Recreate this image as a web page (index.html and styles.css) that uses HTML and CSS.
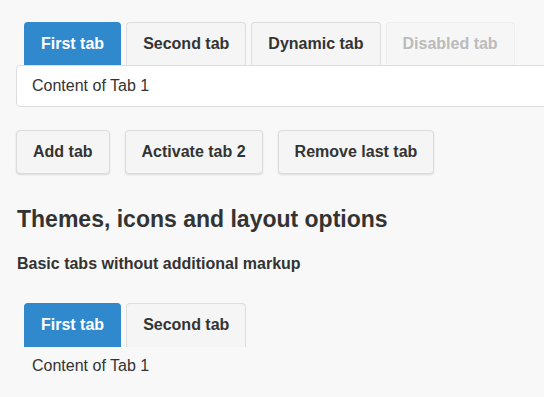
FILE: index.html
```html
<!DOCTYPE html>
<html lang="en">

<head>
    <meta charset="UTF-8">
    <meta name="viewport" content="width=device-width, initial-scale=1.0">
    <title>Tabs</title>
    <link rel="stylesheet" href="styles.css">
</head>

<body>
    <div class="tabs">
        <ul class="tab-list">
            <li class="tab active">First tab</li>
            <li class="tab">Second tab</li>
            <li class="tab">Dynamic tab</li>
            <li class="tab disabled">Disabled tab</li>
        </ul>
        <div class="tab-panel">Content of Tab 1</div>
    </div>

    <div class="actions">
        <button type="button">Add tab</button>
        <button type="button">Activate tab 2</button>
        <button type="button">Remove last tab</button>
    </div>

    <h2>Themes, icons and layout options</h2>
    <h4>Basic tabs without additional markup</h4>

    <div class="tabs plain">
        <ul class="tab-list">
            <li class="tab active">First tab</li>
            <li class="tab">Second tab</li>
        </ul>
        <div class="tab-panel">Content of Tab 1</div>
    </div>
</body>

</html>
```

FILE: styles.css
```css
html,
body {
    overflow-x: hidden;
}

body {
    font-family: "Liberation Sans", Arial, sans-serif;
    font-size: 16px;
    color: #333;
    background-color: #f8f8f8;
    margin: 0;
    padding: 22px 0 0 16px;
}

.tabs {
    margin-right: -6px;
}

.tab-list {
    display: flex;
    gap: 5px;
    list-style: none;
    margin: 0;
    padding: 0 0 0 8px;
}

.tab {
    padding: 12px 16px;
    line-height: 18px;
    font-weight: bold;
    background-color: #f5f5f5;
    border: 1px solid #ddd;
    border-bottom: none;
    border-radius: 4px 4px 0 0;
    cursor: pointer;
}

.tab.active {
    background-color: #3088cd;
    border-color: #3088cd;
    color: #fff;
}

.tab.disabled {
    color: #bbb;
    background-color: #f6f6f6;
    border-color: #eee;
    cursor: default;
}

.tab-panel {
    background-color: #fff;
    border: 1px solid #ddd;
    border-radius: 4px;
    padding: 11px 15px;
    line-height: 18px;
}

.actions {
    display: flex;
    gap: 15px;
    margin-top: 23px;
}

.actions button {
    font-family: inherit;
    font-size: 16px;
    font-weight: bold;
    line-height: 18px;
    color: #333;
    padding: 12px 16px;
    background-color: #f5f5f5;
    border: 1px solid #dcdcdc;
    border-radius: 4px;
    box-shadow: 0 1px 2px rgba(0, 0, 0, 0.12);
    cursor: pointer;
}

h2 {
    font-size: 23px;
    line-height: 26px;
    margin: 32px 0 0 1px;
}

h4 {
    font-size: 16px;
    line-height: 18px;
    margin: 23px 0 0 1px;
}

.plain {
    margin-top: 30px;
}

.plain .tab {
    padding: 12px 16px 13px;
}

.plain .tab-panel {
    background: none;
    border: none;
    padding: 10px 16px;
}
```
